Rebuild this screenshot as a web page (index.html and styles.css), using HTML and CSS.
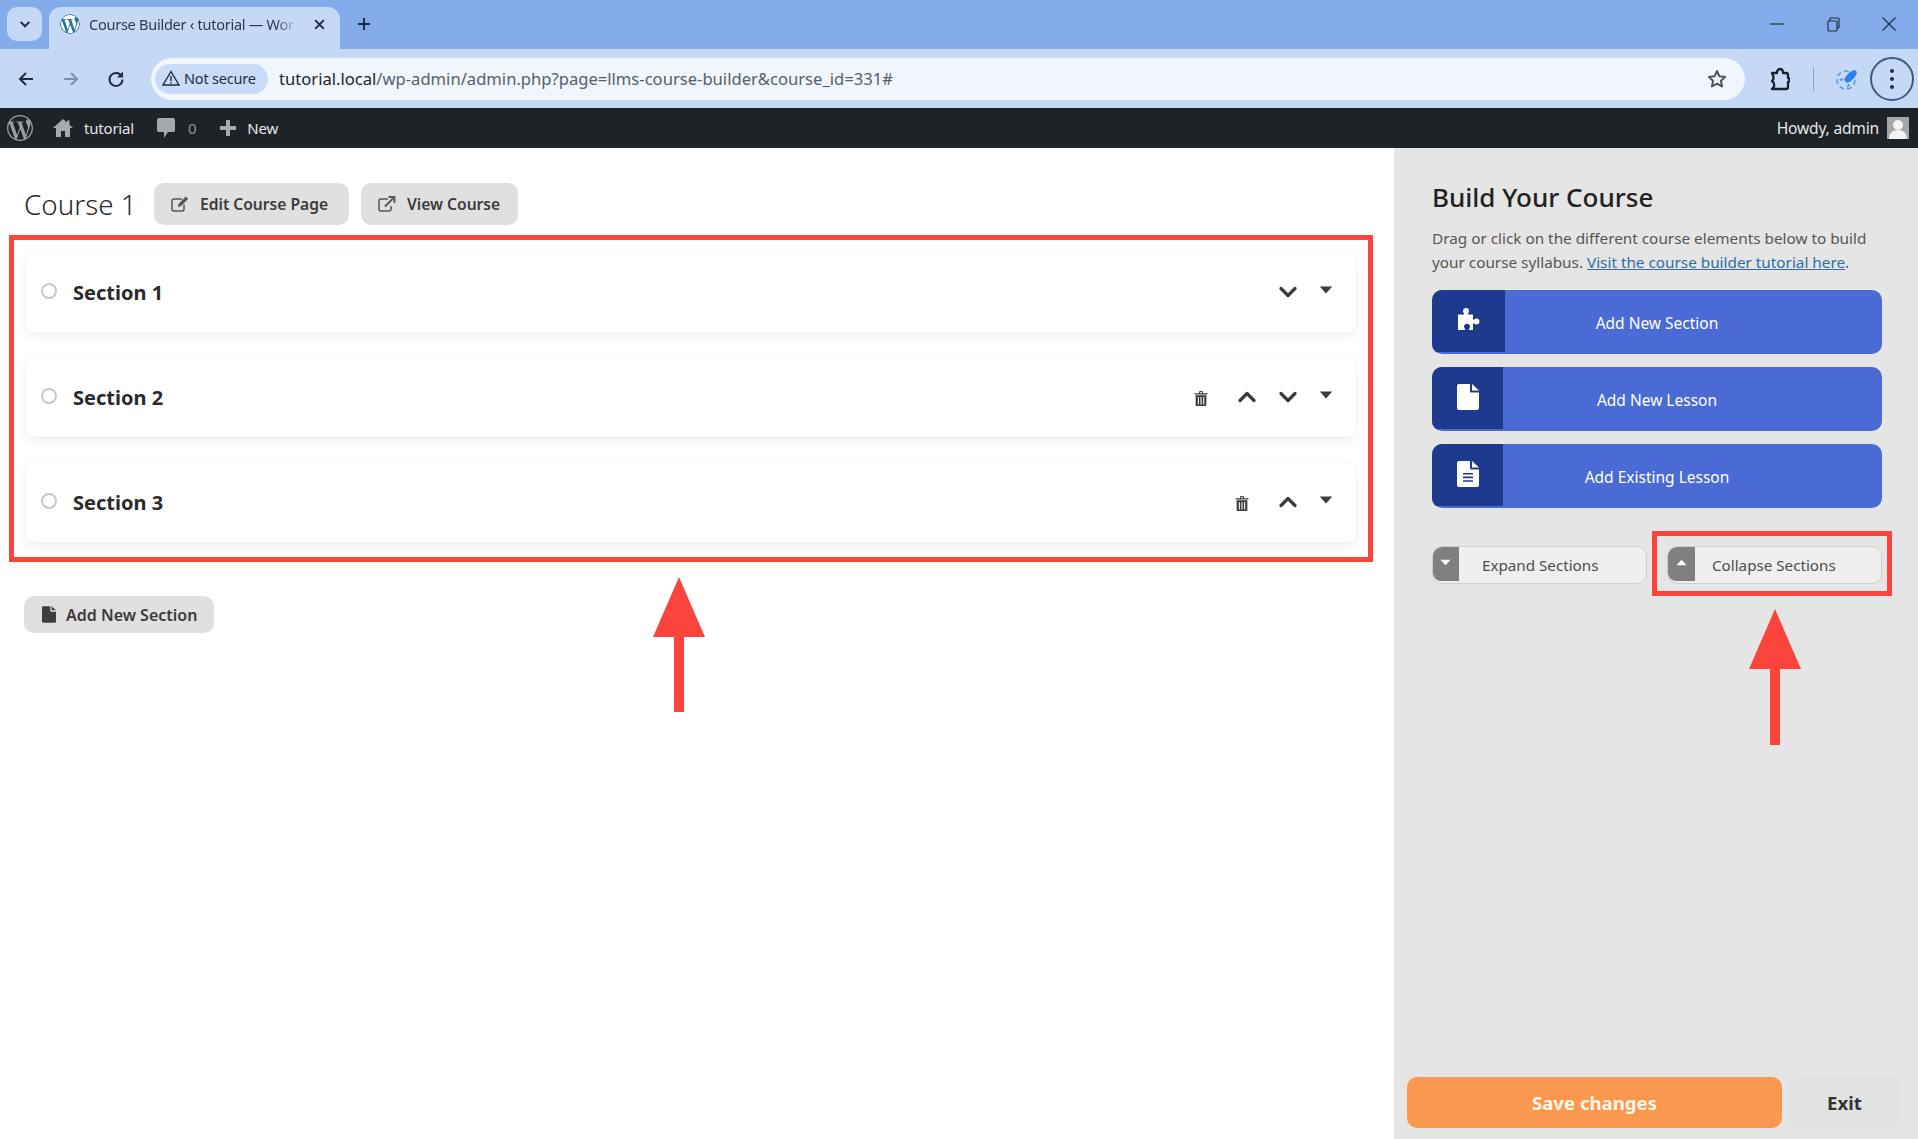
FILE: index.html
```html
<!DOCTYPE html>
<html lang="en">
<head>
<meta charset="utf-8">
<title>Course Builder ‹ tutorial — WordPress</title>
<link rel="stylesheet" href="styles.css">
</head>
<body>
<svg class="defs" width="0" height="0" aria-hidden="true">
  <symbol id="wp" viewBox="0 0 24 24"><path d="M21.469 6.825c.84 1.537 1.318 3.3 1.318 5.175 0 3.979-2.156 7.456-5.363 9.325l3.295-9.527c.615-1.54.82-2.771.82-3.864 0-.405-.026-.78-.07-1.11m-7.981.105c.647-.03 1.232-.105 1.232-.105.582-.075.514-.93-.067-.899 0 0-1.755.135-2.88.135-1.064 0-2.85-.15-2.85-.15-.585-.03-.661.855-.075.885 0 0 .54.061 1.125.09l1.68 4.605-2.37 7.08L5.354 6.9c.649-.03 1.234-.1 1.234-.1.585-.075.516-.93-.065-.896 0 0-1.746.138-2.874.138-.2 0-.438-.008-.69-.015C4.911 3.15 8.235 1.215 12 1.215c2.809 0 5.365 1.072 7.286 2.833-.046-.003-.091-.009-.141-.009-1.06 0-1.812.923-1.812 1.914 0 .89.513 1.643 1.06 2.531.411.72.89 1.643.89 2.977 0 .915-.354 1.994-.821 3.479l-1.075 3.585-3.9-11.61.001.014zM12 22.784c-1.059 0-2.081-.153-3.048-.437l3.237-9.406 3.315 9.087c.024.053.05.101.078.149-1.12.393-2.325.609-3.582.609M1.211 12c0-1.564.336-3.05.935-4.39L7.29 21.709C3.694 19.96 1.212 16.271 1.211 12M12 0C5.385 0 0 5.385 0 12s5.385 12 12 12 12-5.385 12-12S18.615 0 12 0"/></symbol>
  <symbol id="chev-down" viewBox="0 0 16 12"><path d="M2 3l6 6 6-6" fill="none" stroke="currentColor" stroke-width="2.8" stroke-linecap="round" stroke-linejoin="round"/></symbol>
  <symbol id="chev-up" viewBox="0 0 16 12"><path d="M2 9l6-6 6 6" fill="none" stroke="currentColor" stroke-width="2.8" stroke-linecap="round" stroke-linejoin="round"/></symbol>
  <symbol id="caret-down" viewBox="0 0 12 7"><path d="M.5.5h11L6 6.5z"/></symbol>
  <symbol id="caret-up" viewBox="0 0 12 7"><path d="M.5 6.5h11L6 .5z"/></symbol>
  <symbol id="trash" viewBox="0 0 12 14"><path d="M4.2 2V1a1 1 0 0 1 1-1h1.600a1 1 0 0 1 1 1v1H12v1.300H0V2zM5.200 1v1h1.600V1zM1 4h10v9a1 1 0 0 1-1 1H2a1 1 0 0 1-1-1zm2 1.500v7h1v-7zm2.500 0v7h1v-7zm2.500 0v7h1v-7z" fill-rule="evenodd"/></symbol>
  <symbol id="file" viewBox="0 0 22 26"><path d="M2 0h11v7a1.500 1.500 0 0 0 1.500 1.500H22V24a2 2 0 0 1-2 2H2a2 2 0 0 1-2-2V2a2 2 0 0 1 2-2zm13 0l7 6.500h-7z" fill-rule="evenodd"/></symbol>
  <symbol id="file-text" viewBox="0 0 22 26"><path d="M2 0h11v7a1.500 1.500 0 0 0 1.500 1.500H22V24a2 2 0 0 1-2 2H2a2 2 0 0 1-2-2V2a2 2 0 0 1 2-2zm13 0l7 6.500h-7zM6 12v1.600h10V12zm0 3.600v1.600h10v-1.600zm0 3.600v1.600h10v-1.600z" fill-rule="evenodd"/></symbol>
  <symbol id="puzzle" viewBox="0 0 24 24"><path d="M1 7.500h5.500c.8 0 1-.6.500-1.200C6.200 5.400 6 4.800 6 4c0-1.800 1.300-3 3-3s3 1.200 3 3c0 .8-.2 1.400-1 2.300-.5.600-.3 1.200.5 1.200H16v4.500c0 .8.600 1 1.200.5.900-.8 1.500-1 2.300-1 1.800 0 3 1.300 3 3s-1.200 3-3 3c-.8 0-1.400-.2-2.300-1-.6-.5-1.200-.3-1.200.5V23h-3.500c-.8 0-1-.6-.5-1.200.8-.9 1-1.500 1-2.300 0-1.700-1.300-2.800-3-2.800s-3 1.100-3 2.800c0 .8.200 1.400 1 2.300.5.600.3 1.200-.5 1.200H1z"/></symbol>
  <symbol id="edit" viewBox="0 0 18 16"><path d="M11 3H3a2 2 0 0 0-2 2v8a2 2 0 0 0 2 2h8a2 2 0 0 0 2-2V8.500" fill="none" stroke="currentColor" stroke-width="1.500"/><path d="M14.800.6l2.300 2.300-7.300 7.300-3 .7.700-3z"/></symbol>
  <symbol id="external" viewBox="0 0 18 16"><path d="M10 3H3a2 2 0 0 0-2 2v8a2 2 0 0 0 2 2h8a2 2 0 0 0 2-2v-3" fill="none" stroke="currentColor" stroke-width="1.500"/><path d="M7 10.500L15 2.500M10.500 1H16.500V7" fill="none" stroke="currentColor" stroke-width="1.800"/></symbol>
</svg>

<header class="chrome">
  <div class="tabstrip">
    <button class="tab-search"><svg class="ico-12" viewBox="0 0 16 12"><path d="M3 3l5 5 5-5" fill="none" stroke="currentColor" stroke-width="2.400"/></svg></button>
    <div class="tab">
      <svg class="favicon"><use href="#wp"/></svg>
      <span class="tab-title">Course Builder ‹ tutorial — Wor</span>
      <svg class="tab-close" viewBox="0 0 12 12"><path d="M2 2l8 8M10 2l-8 8" fill="none" stroke="currentColor" stroke-width="1.800"/></svg>
    </div>
    <svg class="new-tab" viewBox="0 0 14 14"><path d="M7 1v12M1 7h12" fill="none" stroke="currentColor" stroke-width="2"/></svg>
    <div class="win-controls">
      <svg class="win-ico" viewBox="0 0 16 16"><path d="M1 8h14" fill="none" stroke="currentColor" stroke-width="1.200"/></svg>
      <svg class="win-ico" viewBox="0 0 16 16"><path d="M3 5h8a1 1 0 0 1 1 1v8a1 1 0 0 1-1 1H4a1 1 0 0 1-1-1zM5 5V3a1 1 0 0 1 1-1h7a1 1 0 0 1 1 1v8a1 1 0 0 1-1 1h-1" fill="none" stroke="currentColor" stroke-width="1.200"/></svg>
      <svg class="win-ico" viewBox="0 0 16 16"><path d="M1.500 1.500l13 13M14.500 1.500l-13 13" fill="none" stroke="currentColor" stroke-width="1.200"/></svg>
    </div>
  </div>
  <div class="toolbar">
    <svg class="nav-ico" viewBox="0 0 18 18"><path d="M16 9H3M9 3L3 9l6 6" fill="none" stroke="currentColor" stroke-width="2"/></svg>
    <svg class="nav-ico nav-off" viewBox="0 0 18 18"><path d="M2 9h13M9 3l6 6-6 6" fill="none" stroke="currentColor" stroke-width="2"/></svg>
    <svg class="nav-ico" viewBox="0 0 18 18"><path d="M14.500 6A6.500 6.500 0 1 0 15.500 9.500" fill="none" stroke="currentColor" stroke-width="2"/><path d="M16 1.500v6h-6z"/></svg>
    <div class="omnibox">
      <span class="security">
        <svg class="warn" viewBox="0 0 18 16"><path d="M9 1.500L17 15H1zM9 6v5M9 12v1.500" fill="none" stroke="currentColor" stroke-width="1.400"/></svg>
        Not secure
      </span>
      <span class="url"><span class="url-host">tutorial.local</span>/wp-admin/admin.php?page=llms-course-builder&amp;course_id=331#</span>
      <svg class="star" viewBox="0 0 20 20"><path d="M10 2l2.400 5.300 5.800.6-4.300 3.900 1.200 5.700L10 14.600l-5.100 2.900 1.200-5.700L1.800 7.900l5.800-.6z" fill="none" stroke="currentColor" stroke-width="1.900" stroke-linejoin="round"/></svg>
    </div>
    <svg class="ext-ico" viewBox="0 0 20 24"><path d="M2 6h5c0-2 1-4 3-4s3 2 3 4h3a2 2 0 0 1 2 2v3c2 0 2 4 0 4v5a2 2 0 0 1-2 2H2c3-2 3-6 0-8 3-2 1-6 0-8z" fill="none" stroke="currentColor" stroke-width="2.300" stroke-linejoin="round"/></svg>
    <span class="tool-sep"></span>
    <svg class="rocket" viewBox="0 0 24 24"><circle cx="11" cy="13" r="9" fill="none" stroke="#5a9be8" stroke-width="1.600" stroke-dasharray="5 3"/><path d="M20 3c-5 1-9 5-11 10l3 3c5-2 9-6 10-11z" fill="#2f80ed"/><path d="M8 11l-4 2 3 1zM13 17l-1 4 3-3z" fill="#2f80ed"/></svg>
    <span class="menu-btn"><i></i><i></i><i></i></span>
  </div>
</header>

<nav class="adminbar">
  <svg class="ab-wp"><use href="#wp"/></svg>
  <svg class="ab-home" viewBox="0 0 20 20"><path d="M10 1L0 10h3v9h5v-6h4v6h5v-9h3l-3.500-3.200V2.500h-2.500v2z"/></svg>
  <span class="ab-text ab-site">tutorial</span>
  <svg class="ab-comment" viewBox="0 0 18 20"><path d="M2 0h14a2 2 0 0 1 2 2v10a2 2 0 0 1-2 2h-5l-4 6v-6H2a2 2 0 0 1-2-2V2a2 2 0 0 1 2-2z"/></svg>
  <span class="ab-text ab-count">0</span>
  <svg class="ab-plus" viewBox="0 0 18 18"><path d="M7 1h4v6h6v4h-6v6H7v-6H1V7h6z"/></svg>
  <span class="ab-text">New</span>
  <span class="ab-text ab-howdy">Howdy, admin</span>
  <span class="avatar"><svg viewBox="0 0 22 22"><circle cx="11" cy="8" r="5"/><path d="M2 22c0-6 4-9 9-9s9 3 9 9z"/></svg></span>
</nav>

<main class="builder">
  <section class="canvas">
    <div class="course-head">
      <h1 class="course-title">Course 1</h1>
      <a class="pill pill-edit"><svg class="pill-ico"><use href="#edit"/></svg>Edit Course Page</a>
      <a class="pill pill-view"><svg class="pill-ico"><use href="#external"/></svg>View Course</a>
    </div>
    <div class="sections">
      <article class="section-card">
        <span class="radio"></span><h2 class="section-name">Section 1</h2>
        <div class="actions">
          <svg class="act act-down"><use href="#chev-down"/></svg>
          <svg class="act act-caret"><use href="#caret-down"/></svg>
        </div>
      </article>
      <article class="section-card">
        <span class="radio"></span><h2 class="section-name">Section 2</h2>
        <div class="actions">
          <svg class="act act-trash"><use href="#trash"/></svg>
          <svg class="act act-up"><use href="#chev-up"/></svg>
          <svg class="act act-down"><use href="#chev-down"/></svg>
          <svg class="act act-caret"><use href="#caret-down"/></svg>
        </div>
      </article>
      <article class="section-card">
        <span class="radio"></span><h2 class="section-name">Section 3</h2>
        <div class="actions">
          <svg class="act act-trash"><use href="#trash"/></svg>
          <svg class="act act-up"><use href="#chev-up"/></svg>
          <svg class="act act-caret"><use href="#caret-down"/></svg>
        </div>
      </article>
    </div>
    <a class="pill pill-add"><svg class="add-ico"><use href="#file"/></svg>Add New Section</a>
  </section>

  <aside class="sidebar">
    <h2 class="side-title">Build Your Course</h2>
    <p class="side-desc">Drag or click on the different course elements below to build your course syllabus. <a class="side-link">Visit the course builder tutorial here</a>.</p>
    <div class="elements">
      <a class="element element-wide"><span class="element-icon"><svg class="puzzle"><use href="#puzzle"/></svg></span><span class="element-label">Add New Section</span></a>
      <a class="element"><span class="element-icon"><svg class="doc"><use href="#file"/></svg></span><span class="element-label">Add New Lesson</span></a>
      <a class="element"><span class="element-icon"><svg class="doc"><use href="#file-text"/></svg></span><span class="element-label">Add Existing Lesson</span></a>
    </div>
    <div class="toggles">
      <a class="toggle"><span class="toggle-icon"><svg class="toggle-caret"><use href="#caret-down"/></svg></span><span class="toggle-label">Expand Sections</span></a>
      <a class="toggle"><span class="toggle-icon toggle-icon-wide"><svg class="toggle-caret"><use href="#caret-up"/></svg></span><span class="toggle-label">Collapse Sections</span></a>
    </div>
    <div class="side-foot">
      <a class="save">Save changes</a>
      <a class="exit">Exit</a>
    </div>
  </aside>
</main>

<div class="mark mark-sections"></div>
<div class="mark mark-collapse"></div>
<svg class="arrow arrow-left" viewBox="0 0 52 135"><path d="M26 0L52 60H31V135H21V60H0z"/></svg>
<svg class="arrow arrow-right" viewBox="0 0 52 136"><path d="M26 0L52 60H31V136H21V60H0z"/></svg>
</body>
</html>
```

FILE: styles.css
```css
* { box-sizing: border-box; }
html, body { margin: 0; padding: 0; }
body {
  width: 1918px;
  height: 1139px;
  overflow: hidden;
  position: relative;
  background: #fff;
  font-family: "Noto Sans", "Open Sans", sans-serif;
  color: #222;
}
.defs { position: absolute; }
a { color: inherit; text-decoration: none; }
h1, h2, p { margin: 0; }
svg { display: block; fill: currentColor; flex: none; }

/* browser chrome */
.chrome { color: #1f2d44; }
.tabstrip {
  height: 49px;
  background: #83abe9;
  display: flex;
  align-items: flex-start;
  padding: 7px 0 0 7px;
}
.tab-search {
  width: 35px;
  height: 34px;
  border: 0;
  border-radius: 10px;
  background: #c5d9f6;
  color: #1f2d44;
  display: flex;
  align-items: center;
  justify-content: center;
  padding: 0;
}
.ico-12 { width: 14px; height: 11px; }
.tab {
  margin-left: 7px;
  width: 291px;
  height: 42px;
  background: #c5d9f6;
  border-radius: 12px 12px 0 0;
  display: flex;
  align-items: center;
  padding: 0 0 8px 11px;
}
.favicon { width: 20px; height: 20px; color: #21759b; background: #fff; border-radius: 50%; }
.tab-title {
  margin-left: 9px;
  width: 208px;
  overflow: hidden;
  white-space: nowrap;
  font-size: 14.5px;
  color: #2c3a50;
  letter-spacing: -0.25px;
  -webkit-mask-image: linear-gradient(90deg, #000 90%, transparent);
  mask-image: linear-gradient(90deg, #000 90%, transparent);
}
.tab-close { width: 13px; height: 13px; margin-left: 16px; }
.new-tab { width: 14px; height: 14px; margin: 10px 0 0 17px; }
.win-controls {
  margin-left: auto;
  display: flex;
  gap: 40px;
  padding: 9px 21px 0 0;
}
.win-ico { width: 16px; height: 16px; }
.toolbar {
  height: 59px;
  background: #c5d9f6;
  display: flex;
  align-items: center;
  padding-left: 17px;
}
.nav-ico { width: 18px; height: 18px; margin-right: 27px; }
.nav-off { color: #7c8fad; }
.toolbar .nav-ico:nth-of-type(3) { margin-right: 0; }
.omnibox {
  margin-left: 26px;
  width: 1594px;
  height: 42px;
  border-radius: 21px;
  background: #f1f5fc;
  display: flex;
  align-items: center;
  padding: 0 18px 0 4px;
}
.security {
  height: 30px;
  width: 113px;
  border-radius: 15px;
  background: #c9dcf7;
  display: flex;
  align-items: center;
  padding-left: 7px;
  gap: 4px;
  font-size: 14.5px;
  letter-spacing: -0.2px;
  white-space: nowrap;
  line-height: 26px;
  padding-bottom: 1px;
}
.warn { width: 18px; height: 16px; }
.url { margin-left: 11px; font-size: 16.6px; color: #55606e; white-space: nowrap; }
.url-host { color: #1b2430; }
.star { width: 20px; height: 20px; margin-left: auto; color: #48505a; }
.ext-ico { width: 20px; height: 24px; margin-left: 25px; color: #14202f; }
.tool-sep { width: 1px; height: 24px; background: #8fa5c4; margin-left: 23px; }
.rocket { width: 24px; height: 24px; margin-left: 21px; }
.menu-btn {
  width: 44px;
  height: 44px;
  margin-left: 11px;
  border: 2px solid #3f5880;
  border-radius: 50%;
  display: flex;
  flex-direction: column;
  align-items: center;
  justify-content: center;
  gap: 4px;
}
.menu-btn i { width: 4px; height: 4px; border-radius: 50%; background: #1f2d44; }

/* WP admin bar */
.adminbar {
  height: 40px;
  background: #1d2327;
  color: #a7aaad;
  display: flex;
  align-items: center;
  padding: 0 9px 0 7px;
}
.ab-text { font-size: 15px; letter-spacing: -0.2px; color: #e6e7e8; white-space: nowrap; }
.ab-wp { width: 26px; height: 26px; color: #9a9d9f; }
.ab-home { width: 20px; height: 20px; margin-left: 20px; }
.ab-site { margin-left: 11px; }
.ab-comment { width: 18px; height: 20px; margin-left: 23px; }
.ab-count { margin-left: 13px; color: #8f9396; }
.ab-plus { width: 18px; height: 18px; margin: 0 10px 0 23px; }
.ab-howdy { margin-left: auto; font-size: 15.6px; }
.avatar { width: 22px; height: 22px; margin-left: 8px; background: #a7a7a7; color: #f4f4f4; overflow: hidden; }
.avatar svg { width: 22px; height: 22px; }

/* main */
.builder { display: flex; height: 991px; }
.canvas { width: 1394px; padding: 35px 38px 0 26px; background: #fff; }
.course-head { display: flex; align-items: center; height: 42px; margin-left: -2px; }
.course-title { width: 130px; flex: none; font-size: 27.8px; font-weight: 300; color: #2a2a2a; white-space: nowrap; }
.pill {
  display: inline-flex;
  align-items: center;
  background: #e0e0e0;
  color: #3b3b3b;
  font-weight: 600;
  font-size: 15.6px;
  border-radius: 10px;
  white-space: nowrap;
}
.pill-edit { width: 195px; height: 42px; padding-left: 17px; }
.pill-view { width: 157px; height: 42px; padding-left: 17px; margin-left: 12px; }
.pill-ico { width: 18px; height: 16px; margin-right: 11px; color: #555; }
.pill-add { width: 190px; height: 37px; margin: 54px 0 0 -2px; padding-left: 18px; font-size: 16px; }
.add-ico { width: 14px; height: 17px; margin-right: 10px; color: #3d3d45; }

.sections { display: flex; flex-direction: column; gap: 26px; margin-top: 28px; }
.section-card {
  height: 79px;
  background: #fff;
  border-radius: 8px;
  box-shadow: 0 4px 12px rgba(0, 0, 0, .07), 0 0 2px rgba(0, 0, 0, .05);
  display: flex;
  align-items: center;
  padding: 0 20px 0 15px;
}
.radio {
  width: 16px;
  height: 16px;
  border: 2px solid #c8c8c8;
  border-radius: 50%;
  margin-top: -3px;
}
.section-name { margin-left: 16px; font-size: 20px; font-weight: 700; color: #2a2a2a; }
.actions { margin-left: auto; display: flex; align-items: center; color: #3c3c3c; }
.act { width: 20px; height: 14px; margin-top: -2px; }
.act-caret { height: 8px; margin-left: 18px; margin-top: -6px; }
.act-up + .act-down { margin-left: 21px; }
.act-trash { height: 15px; margin-right: 26px; margin-top: 2px; }

/* sidebar */
.sidebar {
  width: 524px;
  background: #e5e5e5;
  padding: 31px 36px 11px 38px;
  display: flex;
  flex-direction: column;
}
.side-title { font-size: 26px; line-height: 36px; font-weight: 500; color: #222; }
.side-desc { margin-top: 11px; font-size: 15.3px; line-height: 24px; color: #555; }
.side-link { color: #2f6ea8; text-decoration: underline; }
.elements { display: flex; flex-direction: column; gap: 13px; margin-top: 16px; }
.element {
  position: relative;
  display: flex;
  height: 64px;
  background: #4a6bd6;
  border-radius: 10px;
  overflow: hidden;
  color: #fff;
  font-size: 15.5px;
}
.element-icon {
  width: 71px;
  height: 62px;
  background: #1e3a8e;
  display: flex;
  align-items: center;
  justify-content: center;
  padding: 0 0 2px 0;
}
.element-wide .element-icon { width: 73px; padding-bottom: 5px; }
.element-label { flex: 1; margin-left: -71px; text-align: center; line-height: 66px; }
.element-wide .element-label { margin-left: -73px; }
.puzzle { width: 24px; height: 24px; }
.doc { width: 22px; height: 26px; }
.toggles { display: flex; gap: 20px; margin-top: 38px; }
.toggle {
  width: 215px;
  height: 38px;
  background: #efefef;
  border: 1px solid #cfcfcf;
  border-radius: 10px;
  display: flex;
  align-items: center;
  font-size: 15.2px;
  color: #4d4d4d;
  overflow: hidden;
}
.toggle-icon {
  width: 26px;
  height: 34px;
  align-self: flex-start;
  background: #808080;
  border-radius: 8px 0 0 8px;
  color: #fff;
  display: flex;
  align-items: center;
  justify-content: center;
  padding-right: 1px;
}
.toggle-icon-wide { width: 27px; }
.toggle-caret { width: 11px; height: 7px; margin-top: -4px; }
.toggle-label { margin-left: 23px; white-space: nowrap; }
.toggle-icon-wide + .toggle-label { margin-left: 17px; }
.side-foot { margin-top: auto; margin-left: -25px; margin-right: -19px; display: flex; gap: 6px; }
.save, .exit {
  height: 51px;
  border-radius: 10px;
  display: flex;
  align-items: center;
  justify-content: center;
  font-size: 18.6px;
  font-weight: 700;
  flex: none;
}
.save { width: 375px; background: #f9984e; color: #fff6e8; }
.exit { width: 113px; background: #e2e2e2; color: #333; }

/* annotations laid over the screenshot */
.mark { position: absolute; border: 5px solid #fb443b; }
.mark-sections { left: 9px; top: 235px; width: 1364px; height: 327px; }
.mark-collapse { left: 1652px; top: 531px; width: 240px; height: 65px; }
.arrow { position: absolute; width: 52px; fill: #fb443b; }
.arrow-left { left: 653px; top: 577px; height: 135px; }
.arrow-right { left: 1749px; top: 609px; height: 136px; }
```
